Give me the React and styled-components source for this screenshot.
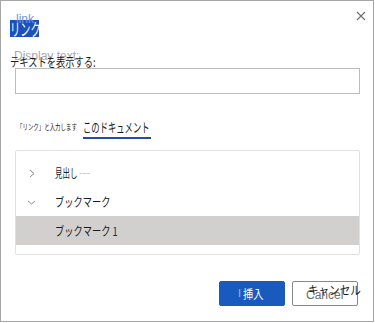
import React from "react";
import styled, { createGlobalStyle } from "styled-components";

const Global = createGlobalStyle`
  html, body {
    margin: 0;
    padding: 0;
    background: #ffffff;
  }
  body {
    font-family: "Noto Sans CJK JP", "Noto Sans", sans-serif;
    color: #1b1b1b;
  }
`;

const Dialog = styled.div`
  position: relative;
  box-sizing: border-box;
  width: 374px;
  height: 322px;
  border: 1px solid #a6a6a6;
  padding: 19px 15px 0 9px;
  display: flex;
  flex-direction: column;
  background: #fff;
`;

const Header = styled.div`
  display: flex;
  align-items: flex-start;
  justify-content: space-between;
  height: 17px;
`;

const Title = styled.div`
  position: relative;
  width: 29px;
  height: 17px;
  background: #1c50bf;
  color: #fff;
`;

const Squeeze = styled.span`
  position: relative;
  display: block;
  width: max-content;
  white-space: nowrap;
  font-size: ${(p) => p.$size}px;
  line-height: ${(p) => p.$lh || p.$size}px;
  transform: scaleX(${(p) => p.$sx});
  transform-origin: left center;
`;

const Ghost = styled.span`
  position: absolute;
  left: ${(p) => p.$x}px;
  top: ${(p) => p.$y}px;
  font-family: "Liberation Sans", sans-serif;
  font-size: ${(p) => p.$size || 12}px;
  line-height: 1;
  color: ${(p) => p.$color || "#bdbdbd"};
  white-space: nowrap;
  pointer-events: none;
`;

const Close = styled.button`
  border: 0;
  background: none;
  padding: 0;
  margin: -9px -8px 0 0;
  width: 10px;
  height: 10px;
  cursor: pointer;
  display: flex;
`;

const Field = styled.div`
  position: relative;
  margin-top: 18px;
`;

const Label = styled.div`
  height: 13px;
`;

const Input = styled.input`
  box-sizing: border-box;
  display: block;
  margin-left: 5px;
  width: 345px;
  height: 26px;
  border: 1px solid #bcbcbc;
  outline: none;
  font-family: inherit;
`;

const Tabs = styled.div`
  display: flex;
  align-items: flex-start;
  margin-top: 22px;
  margin-left: 7px;
`;

const Tab = styled.div`
  box-sizing: border-box;
  width: ${(p) => p.$w}px;
  height: 23px;
  padding-top: ${(p) => (p.$active ? 2 : 5)}px;
  border-bottom: 2px solid ${(p) => (p.$active ? "#1f4f9e" : "transparent")};
`;

const Tree = styled.div`
  box-sizing: border-box;
  margin: 11px 0 0 5px;
  width: 345px;
  height: 105px;
  border: 1px solid #e1e1e1;
  border-radius: 2px;
  padding-top: 7px;
`;

const Row = styled.div`
  position: relative;
  display: flex;
  align-items: center;
  height: ${(p) => p.$h}px;
  background: ${(p) => (p.$selected ? "#d2d0ce" : "transparent")};
`;

const Chevron = styled.span`
  width: 39px;
  display: flex;
  padding-left: ${(p) => p.$pl}px;
  box-sizing: border-box;
`;

const Num = styled.span`
  color: #2a1a6a;
`;

const Footer = styled.div`
  display: flex;
  justify-content: flex-end;
  gap: 7px;
  margin-top: 26px;
`;

const Button = styled.button`
  position: relative;
  box-sizing: border-box;
  width: 66px;
  height: 25px;
  border-radius: 2px;
  border: 1px solid ${(p) => (p.$primary ? "#185abd" : "#8a8886")};
  background: ${(p) => (p.$primary ? "#185abd" : "#fff")};
  color: ${(p) => (p.$primary ? "#fff" : "#1b1b1b")};
  font-family: inherit;
  overflow: visible;
  display: flex;
  align-items: ${(p) => (p.$primary ? "center" : "flex-start")};
  padding: ${(p) => (p.$primary ? "0 0 0 23px" : "1px 0 0 15px")};
`;

export default function App() {
  return (
    <>
      <Global />
      <Dialog>
        <Header>
          <Title>
            <Ghost $x={6} $y={-7} $size={12} $color="#6f95e0">
              link
            </Ghost>
            <Squeeze $size={17} $lh={17} $sx={0.6}>
              リンク
            </Squeeze>
          </Title>
          <Close aria-label="閉じる">
            <svg width="10" height="10" viewBox="0 0 10 10">
              <path d="M1 1L9 9M9 1L1 9" stroke="#6e6e6e" strokeWidth="1.1" fill="none" />
            </svg>
          </Close>
        </Header>

        <Field>
          <Ghost $x={4} $y={-5} $size={12} $color="#a8a8a8">
            Display text:
          </Ghost>
          <Label>
            <Squeeze $size={12} $lh={13} $sx={0.77} style={{ background: "linear-gradient(transparent 40%, #fff 40%)" }}>
              テキストを表示する:
            </Squeeze>
          </Label>
          <Input />
        </Field>

        <Tabs>
          <Tab $w={66}>
            <Squeeze $size={8} $lh={12} $sx={0.68}>
              「リンク」と入力します
            </Squeeze>
          </Tab>
          <Tab $w={68} $active>
            <Squeeze $size={13} $lh={17} $sx={0.64}>
              このドキュメント
            </Squeeze>
          </Tab>
        </Tabs>

        <Tree>
          <Row $h={30}>
            <Chevron $pl={13}>
              <svg width="6" height="9" viewBox="0 0 6 9">
                <path d="M1 1L5 4.5L1 8" stroke="#8a8a8a" strokeWidth="1" fill="none" />
              </svg>
            </Chevron>
            <Squeeze $size={12} $lh={14} $sx={0.62}>
              見出し
            </Squeeze>
            <Ghost $x={63} $y={9} $size={11} $color="#c4c4c4">
              ---
            </Ghost>
          </Row>
          <Row $h={28}>
            <Chevron $pl={11}>
              <svg width="9" height="5" viewBox="0 0 9 5">
                <path d="M1 1L4.5 4L8 1" stroke="#8a8a8a" strokeWidth="1" fill="none" />
              </svg>
            </Chevron>
            <Squeeze $size={12} $lh={14} $sx={0.77}>
              ブックマーク
            </Squeeze>
          </Row>
          <Row $h={29} $selected>
            <Chevron $pl={11} />
            <Squeeze $size={12} $lh={14} $sx={0.77}>
              ブックマーク <Num>1</Num>
            </Squeeze>
          </Row>
        </Tree>

        <Footer>
          <Button $primary>
            <Ghost $x={18} $y={6} $size={11} $color="#9bb8e6">
              I
            </Ghost>
            <Squeeze $size={12} $lh={14} $sx={0.85}>
              挿入
            </Squeeze>
          </Button>
          <Button>
            <Ghost $x={13} $y={7} $size={12} $color="#6e6e6e">
              Cancel
            </Ghost>
            <Squeeze $size={12} $lh={14} $sx={0.88}>
              キャンセル
            </Squeeze>
          </Button>
        </Footer>
      </Dialog>
    </>
  );
}
